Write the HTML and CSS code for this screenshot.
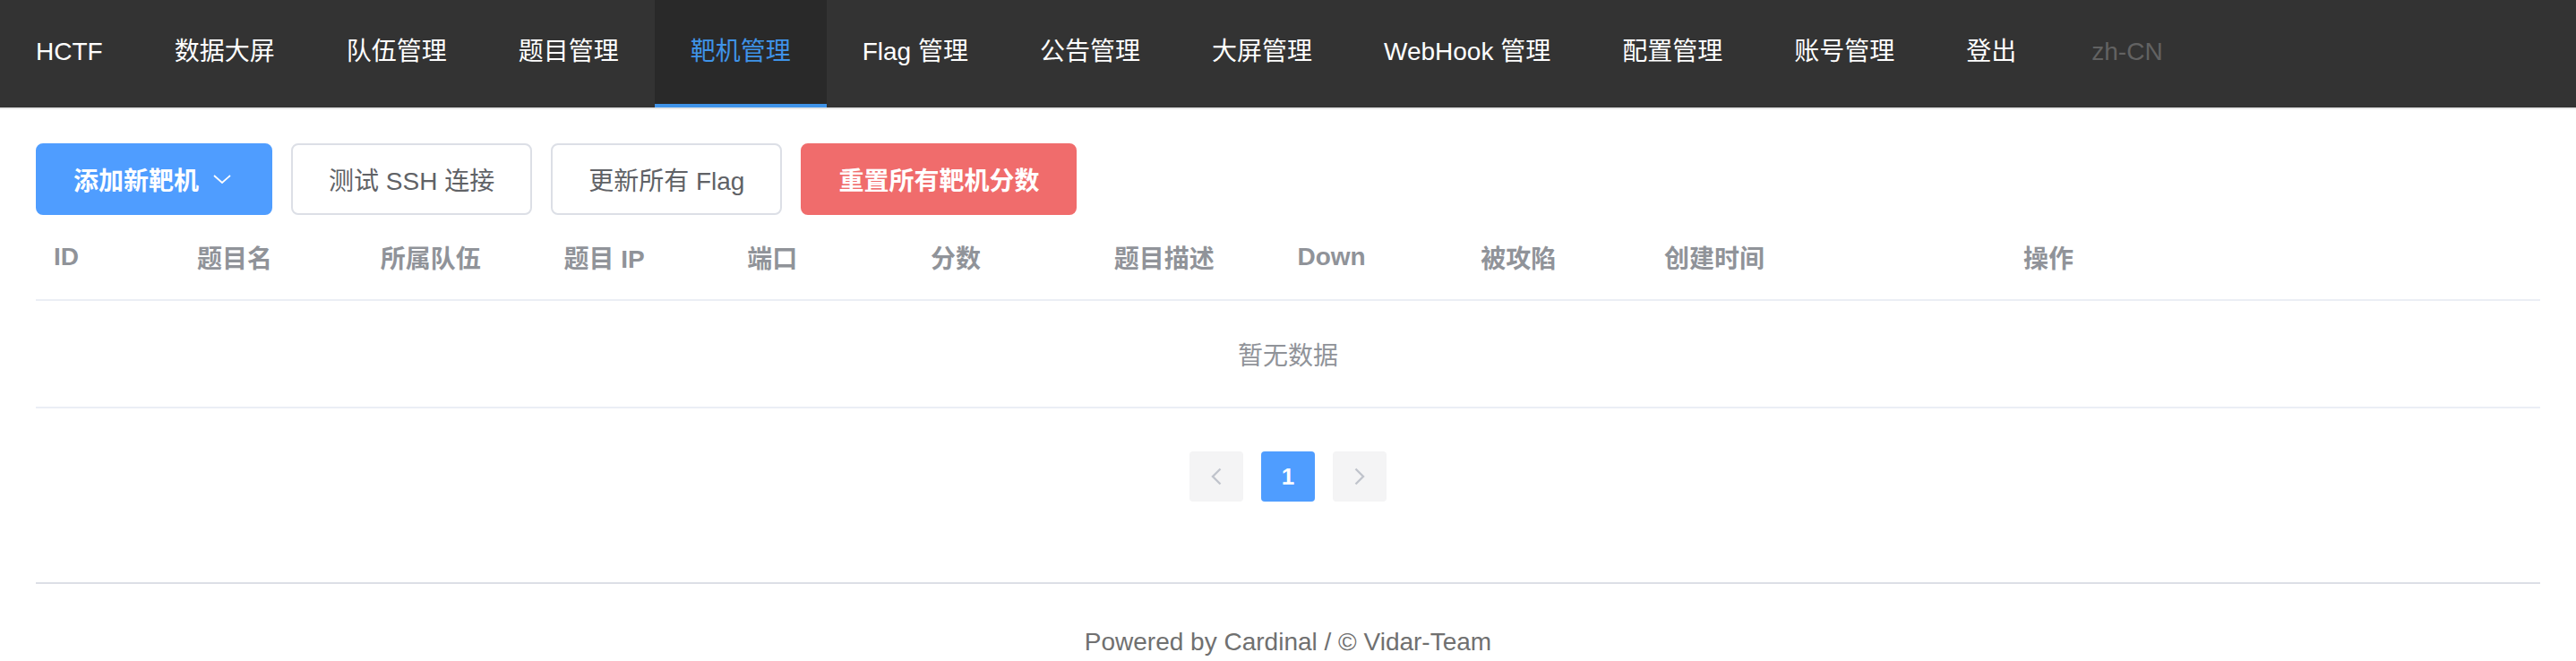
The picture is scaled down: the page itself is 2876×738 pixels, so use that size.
FILE: index.html
```html
<!DOCTYPE html>
<html lang="zh-CN">
<head>
<meta charset="utf-8">
<title>HCTF - 靶机管理</title>
<link rel="stylesheet" href="styles.css">
</head>
<body>
<nav class="nav">
  <a class="nav-item">HCTF</a>
  <a class="nav-item">数据大屏</a>
  <a class="nav-item">队伍管理</a>
  <a class="nav-item">题目管理</a>
  <a class="nav-item is-active">靶机管理</a>
  <a class="nav-item">Flag 管理</a>
  <a class="nav-item">公告管理</a>
  <a class="nav-item">大屏管理</a>
  <a class="nav-item">WebHook 管理</a>
  <a class="nav-item">配置管理</a>
  <a class="nav-item">账号管理</a>
  <a class="nav-item">登出</a>
  <a class="nav-item is-disabled">zh-CN</a>
</nav>

<main class="main">
  <div class="toolbar">
    <button class="btn btn-primary">添加新靶机<svg class="btn-caret" viewBox="0 0 20 10" width="20" height="10"><path d="M1 1 L10 9 L19 1" fill="none" stroke="#fff" stroke-width="1.8"/></svg></button>
    <button class="btn btn-default">测试 SSH 连接</button>
    <button class="btn btn-default">更新所有 Flag</button>
    <button class="btn btn-danger">重置所有靶机分数</button>
  </div>

  <div class="table">
    <div class="table-head">
      <div class="th">ID</div>
      <div class="th">题目名</div>
      <div class="th">所属队伍</div>
      <div class="th">题目 IP</div>
      <div class="th">端口</div>
      <div class="th">分数</div>
      <div class="th">题目描述</div>
      <div class="th">Down</div>
      <div class="th">被攻陷</div>
      <div class="th">创建时间</div>
      <div class="th">操作</div>
    </div>
    <div class="table-empty">暂无数据</div>
  </div>

  <div class="pager">
    <button class="pg-btn pg-disabled"><svg viewBox="0 0 12 20" width="12" height="20"><path d="M10.5 1.5 L2 10 L10.5 18.5" fill="none" stroke="#c0c4cc" stroke-width="2.4"/></svg></button>
    <button class="pg-btn pg-active">1</button>
    <button class="pg-btn pg-disabled"><svg viewBox="0 0 12 20" width="12" height="20"><path d="M1.5 1.5 L10 10 L1.5 18.5" fill="none" stroke="#c0c4cc" stroke-width="2.4"/></svg></button>
  </div>

  <hr class="divider">
  <footer class="footer">Powered by Cardinal / © Vidar-Team</footer>
</main>
</body>
</html>
```
FILE: styles.css
```css
* { box-sizing: border-box; }

html, body {
  margin: 0;
  padding: 0;
  background: #fff;
  font-family: "Liberation Sans", Helvetica, Arial, "Noto Sans CJK SC", sans-serif;
  -webkit-font-smoothing: antialiased;
}

.nav {
  display: flex;
  height: 122px;
  background: #333333;
  border-bottom: 2px solid #e6e6e6;
}

.nav-item {
  display: block;
  padding: 0 40px;
  height: 120px;
  line-height: 116px;
  font-size: 28px;
  color: #ffffff;
  border-bottom: 4px solid transparent;
  white-space: nowrap;
  cursor: pointer;
}

.nav-item.is-active {
  background: #292929;
  color: #3f93e8;
  border-bottom-color: #3f93e8;
}

.nav-item.is-disabled {
  color: #626262;
  margin-left: 4px;
}

.main {
  padding: 38px 40px 0;
}

.toolbar {
  display: flex;
  align-items: center;
}

.btn {
  display: inline-flex;
  align-items: center;
  height: 80px;
  padding: 0 40px;
  font-family: inherit;
  font-size: 28px;
  border-radius: 8px;
  border: 2px solid #dcdfe6;
  background: #fff;
  color: #606266;
  white-space: nowrap;
  cursor: pointer;
}

.btn + .btn { margin-left: 21px; }

.btn-primary {
  background: #4f9dff;
  border-color: #4f9dff;
  color: #fff;
  font-weight: bold;
  padding-right: 44px;
}

.btn-caret {
  margin-left: 16px;
}

.btn-danger {
  background: #f06c6c;
  border-color: #f06c6c;
  color: #fff;
  font-weight: bold;
}

.table-head {
  display: grid;
  grid-template-columns: 160px repeat(8, 204.75px) 401px 1fr;
  height: 96px;
  align-items: center;
  border-bottom: 2px solid #ebeef5;
}

.th {
  padding-left: 20px;
  font-size: 28px;
  font-weight: bold;
  color: #909399;
  white-space: nowrap;
}

.table-empty {
  height: 120px;
  display: flex;
  align-items: center;
  justify-content: center;
  font-size: 28px;
  color: #909399;
  border-bottom: 2px solid #ebeef5;
}

.pager {
  display: flex;
  justify-content: center;
  gap: 20px;
  margin-top: 48px;
}

.pg-btn {
  width: 60px;
  height: 56px;
  border: none;
  border-radius: 4px;
  background: #f4f4f5;
  display: flex;
  align-items: center;
  justify-content: center;
  font-family: inherit;
  font-size: 26px;
  font-weight: bold;
  color: #606266;
  padding: 0;
}

.pg-btn.pg-active {
  background: #4f9dff;
  color: #fff;
}

.divider {
  margin: 90px 0 0;
  border: none;
  height: 2px;
  background: #dcdfe6;
}

.footer {
  margin-top: 45px;
  text-align: center;
  font-size: 28px;
  line-height: 40px;
  color: #707070;
}
```
